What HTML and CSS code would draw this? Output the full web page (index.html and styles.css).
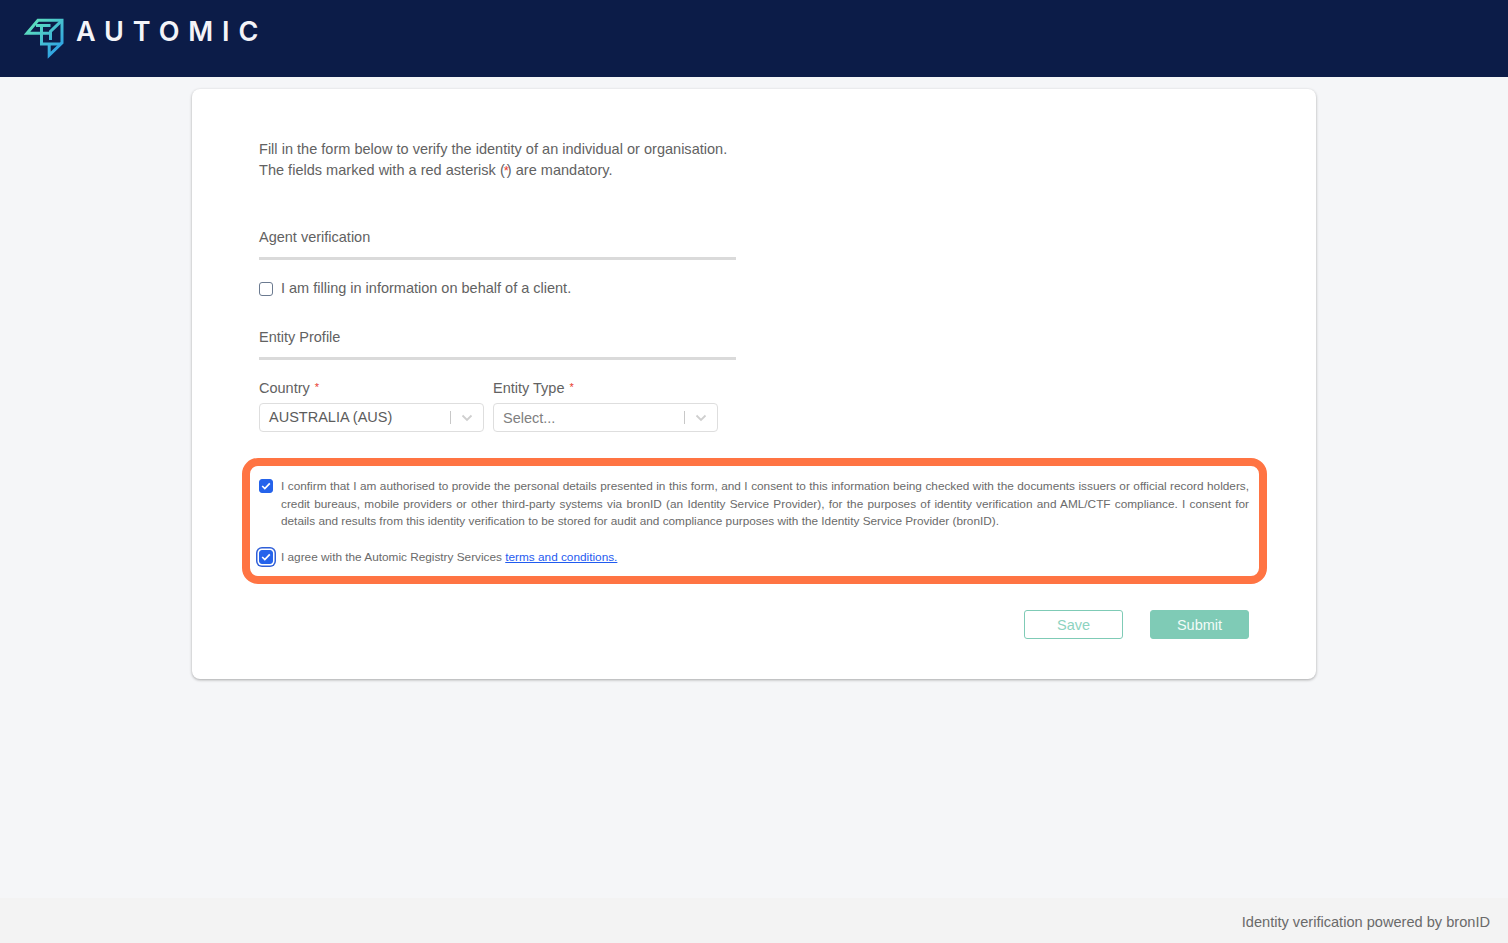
FILE: index.html
```html
<!DOCTYPE html>
<html lang="en">
<head>
<meta charset="utf-8">
<title>Automic identity verification</title>
<link rel="stylesheet" href="styles.css">
</head>
<body>
<header class="topbar">
  <svg class="logo" width="42" height="42" viewBox="0 0 42 42" aria-hidden="true">
    <defs>
      <linearGradient id="lg" gradientUnits="userSpaceOnUse" x1="4" y1="4" x2="36" y2="38">
        <stop offset="0" stop-color="#62e6b8"/>
        <stop offset="1" stop-color="#2a9be8"/>
      </linearGradient>
    </defs>
    <g fill="none" stroke="url(#lg)" stroke-width="3" stroke-miterlimit="10">
      <path d="M27.500 15.300H4L15 2.300H39V24.800L26.200 37.300V26"/>
      <path d="M13 7.500H27.500M38.500 2.800L27.500 13.500V22M18.500 7.500V15M18.500 15V26H38"/>
    </g>
  </svg>
  <span class="brand">AUTOMIC</span>
</header>
<main class="page">
  <section class="card">
    <p class="intro">Fill in the form below to verify the identity of an individual or organisation.<br>The fields marked with a red asterisk (<span class="req">*</span>) are mandatory.</p>
    <h2 class="section-title first">Agent verification</h2>
    <label class="check-row">
      <span class="box"></span>
      <span>I am filling in information on behalf of a client.</span>
    </label>
    <h2 class="section-title second">Entity Profile</h2>
    <div class="fields">
      <div class="field">
        <div class="label">Country <span class="req">*</span></div>
        <div class="select">
          <span class="value">AUSTRALIA (AUS)</span>
          <span class="sep"></span>
          <svg class="chev" width="12" height="8" viewBox="0 0 12 8" aria-hidden="true"><path d="M1.500 1.500L6 6L10.500 1.500" fill="none" stroke="#cfcfcf" stroke-width="1.800"/></svg>
        </div>
      </div>
      <div class="field">
        <div class="label">Entity Type <span class="req">*</span></div>
        <div class="select">
          <span class="placeholder">Select...</span>
          <span class="sep"></span>
          <svg class="chev" width="12" height="8" viewBox="0 0 12 8" aria-hidden="true"><path d="M1.500 1.500L6 6L10.500 1.500" fill="none" stroke="#cfcfcf" stroke-width="1.800"/></svg>
        </div>
      </div>
    </div>
    <div class="consent">
      <div class="consent-row">
        <span class="box checked"><svg width="10" height="8" viewBox="0 0 10 8" aria-hidden="true"><path d="M1.200 4L3.800 6.500L8.800 1.300" fill="none" stroke="#fff" stroke-width="1.700"/></svg></span>
        <p class="consent-text">I confirm that I am authorised to provide the personal details presented in this form, and I consent to this information being checked with the documents issuers or official record holders, credit bureaus, mobile providers or other third-party systems via bronID (an Identity Service Provider), for the purposes of identity verification and AML/CTF compliance. I consent for details and results from this identity verification to be stored for audit and compliance purposes with the Identity Service Provider (bronID).</p>
      </div>
      <div class="consent-row agree">
        <span class="box checked focused"><svg width="10" height="8" viewBox="0 0 10 8" aria-hidden="true"><path d="M1.200 4L3.800 6.500L8.800 1.300" fill="none" stroke="#fff" stroke-width="1.700"/></svg></span>
        <p class="consent-text">I agree with the Automic Registry Services <a href="#">terms and conditions.</a></p>
      </div>
    </div>
    <div class="actions">
      <button class="btn save" type="button">Save</button>
      <button class="btn submit" type="button">Submit</button>
    </div>
  </section>
</main>
<footer class="footer">Identity verification powered by bronID</footer>
</body>
</html>
```
FILE: styles.css
```css
* { box-sizing: border-box; }
html, body { height: 100%; }
body {
  margin: 0;
  display: flex;
  flex-direction: column;
  min-height: 943px;
  background: #f5f6f8;
  font-family: "Liberation Sans", Arial, sans-serif;
  color: #626262;
  font-size: 14.500px;
  overflow: hidden;
}
.topbar {
  height: 77px;
  flex: none;
  background: #0c1c48;
  display: flex;
  align-items: flex-start;
  padding: 18px 0 0 23px;
}
.logo { flex: none; }
.brand {
  margin-left: 11px;
  color: #f4f4f8;
  font-family: "Inter", "Liberation Sans", sans-serif;
  font-weight: 600;
  font-size: 27px;
  line-height: 27px;
  letter-spacing: 8.900px;
}
.page {
  flex: 1;
  display: flex;
  justify-content: center;
  align-items: flex-start;
  padding-top: 12px;
}
.card {
  width: 1124px;
  height: 590px;
  background: #fff;
  border-radius: 8px;
  box-shadow: 0 1px 3px rgba(0, 0, 0, 0.32);
  padding: 50px 67px 0;
}
.intro {
  margin: 0;
  line-height: 21px;
  letter-spacing: 0.020px;
}
.req { color: #e8392e; font-size: 11px; }
.intro .req { font-size: 13px; margin: 0 -2px 0 -1px; }
.section-title {
  margin: 0;
  width: 477px;
  font-size: 14.500px;
  font-weight: 400;
  line-height: 21px;
  padding-bottom: 9px;
  border-bottom: 3px solid #dadada;
}
.section-title.first { margin-top: 46px; }
.section-title.second { margin-top: 28px; }
.check-row {
  display: flex;
  align-items: center;
  gap: 8px;
  margin-top: 18px;
  line-height: 21px;
}
.box {
  width: 14px;
  height: 14px;
  flex: none;
  border: 1.500px solid #6b7a90;
  border-radius: 3px;
  background: #fff;
  display: flex;
  align-items: center;
  justify-content: center;
}
.box.checked { background: #2563eb; border-color: #2563eb; }
.box.focused { box-shadow: 0 0 0 1.500px #fff, 0 0 0 3px #2f5fd8; }
.fields {
  display: flex;
  gap: 9px;
  margin-top: 18px;
}
.field { width: 225px; }
.label { line-height: 19px; }
.label .req { margin-left: 1px; vertical-align: 2px; }
.select {
  margin-top: 5px;
  height: 29px;
  background: #fff;
  border: 1px solid #dedede;
  border-radius: 4px;
  display: flex;
  align-items: center;
  padding: 0 10px 0 9px;
}
.value { flex: 1; color: #5c5c5c; font-size: 14.500px; margin-top: -1px; }
.placeholder { flex: 1; color: #808080; font-size: 14.500px; padding-top: 1px; }
.sep { width: 1px; height: 13px; background: #c8c8c8; margin-right: 10px; }
.chev { flex: none; }
.consent {
  margin: 26px -18px 0 -17px;
  height: 126px;
  border: 8px solid #ff7443;
  border-radius: 16px;
  background: #fff;
  padding: 12px 0 0 9px;
}
.consent-row {
  display: flex;
  gap: 8px;
  align-items: flex-start;
}
.consent-row .box { margin-top: 1px; }
.consent-row.agree { margin-top: 18px; }
.consent-text {
  margin: 0;
  font-size: 11.800px;
  line-height: 17.500px;
  text-align: justify;
  width: 968px;
  color: #6a6a6a;
}
.consent-text a { color: #1f5bf0; }
.actions {
  display: flex;
  justify-content: flex-end;
  gap: 27px;
  margin-top: 26px;
}
.btn {
  width: 99px;
  height: 29px;
  border-radius: 3px;
  font-family: inherit;
  font-size: 14.500px;
  padding: 0;
}
.save { background: #fff; border: 1px solid #7fcbb6; color: #8dd3bf; }
.submit { background: #7fcbb6; border: 1px solid #7fcbb6; color: #f2fbf8; }
.footer {
  flex: none;
  height: 45px;
  background: #f3f3f3;
  text-align: right;
  padding: 15px 18px 0 0;
  line-height: 19px;
  font-size: 14.600px;
  color: #6a6a6a;
}
```
